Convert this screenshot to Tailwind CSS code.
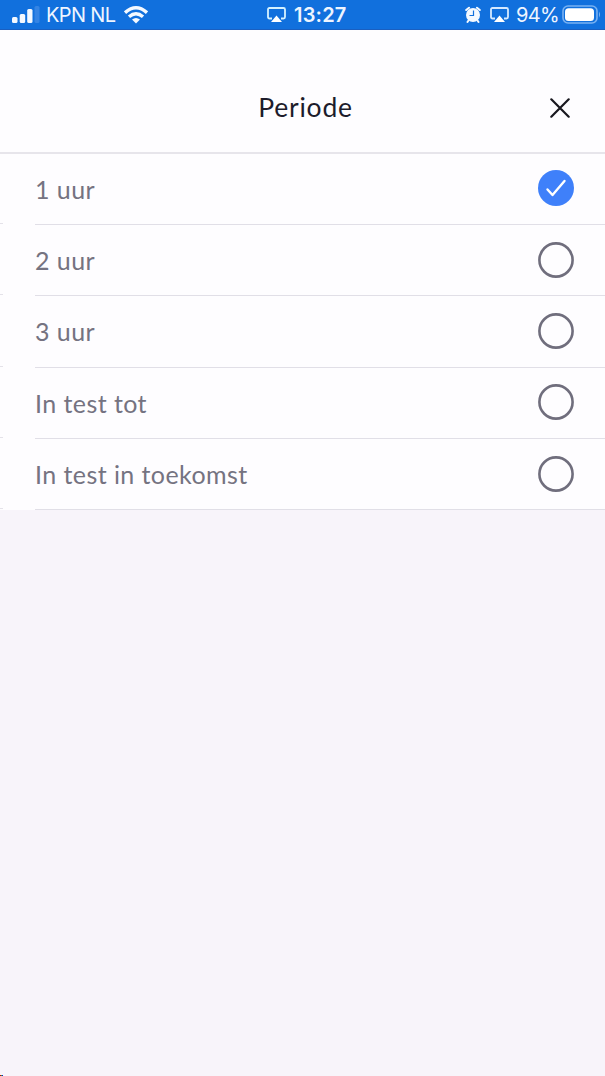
<!DOCTYPE html>
<html lang="nl">
<head>
  <meta charset="UTF-8">
  <meta name="viewport" content="width=device-width, initial-scale=1.0">
  <title>Periode</title>
  <script src="https://cdn.jsdelivr.net/npm/@tailwindcss/browser@4"></script>
</head>
<body class="bg-[#f8f4fa] h-[1076px] overflow-hidden flex flex-col font-['Lato',sans-serif]">

  <!-- Status bar -->
  <header class="h-[30px] shrink-0 bg-[#1170dd] border-b border-[#1a5fc0] text-[#eef5ff] flex items-center pl-3 pr-[3px] font-['Inter',sans-serif] text-[20px] leading-none">
    <div class="flex items-center w-[255px]">
      <svg class="w-7 h-[18px]" viewBox="0 0 28 18" fill="#f4f9ff">
        <rect x="0" y="11" width="5.5" height="6" rx="1.5" />
        <rect x="7.7" y="8" width="5.5" height="9" rx="1.5" />
        <rect x="15.2" y="3" width="5.3" height="14" rx="1.5" />
        <rect x="22.5" y="0" width="5" height="17" rx="1.5" fill="#3484e4" />
      </svg>
      <span class="ml-[6px] w-[72px] tracking-[-0.65px] whitespace-nowrap">KPN NL</span>
      <svg class="ml-[6px] w-6 h-[18px]" viewBox="0 0 24 18" fill="none" stroke="#f4f9ff" stroke-width="3.4">
        <path d="M1 6.6Q12-3 23 6.6" />
        <path d="M5 10.8Q12 4.8 19 10.8" />
        <path d="M12 17.6 8 13.6Q12 10.3 16 13.6Z" fill="#f4f9ff" stroke="none" />
      </svg>
    </div>
    <div class="flex items-center w-[198px]">
      <svg class="w-[19px] h-4" viewBox="0 0 19 16">
        <path d="M5 11.5H2.5Q1 11.5 1 10V2.5Q1 1 2.5 1H16.5Q18 1 18 2.5V10Q18 11.5 16.5 11.5H14" fill="none" stroke="#d5f2ff" stroke-width="1.8" />
        <path d="M9.5 8.5 15 15H4Z" fill="#fff" />
      </svg>
      <span class="ml-[8px] font-semibold tracking-[0.2px]">13:27</span>
    </div>
    <div class="flex items-center">
      <svg class="w-4 h-[18px]" viewBox="0 0 16 18">
        <circle cx="8" cy="9" r="7" fill="#f4f9ff" />
        <path d="M1.2 4 4 1.7M14.8 4 12 1.7M3.5 14.5 2.5 16M12.5 14.5 13.5 16" stroke="#f4f9ff" stroke-width="2" stroke-linecap="round" />
        <path d="M8.5 4.5V9.5H4.5" fill="none" stroke="#1170dd" stroke-width="1.2" />
      </svg>
      <svg class="ml-[9px] w-[19px] h-4" viewBox="0 0 19 16">
        <path d="M5 11.5H2.5Q1 11.5 1 10V2.5Q1 1 2.5 1H16.5Q18 1 18 2.5V10Q18 11.5 16.5 11.5H14" fill="none" stroke="#d5e9ff" stroke-width="1.8" />
        <path d="M9.5 8.5 15 15H4Z" fill="#fff" />
      </svg>
      <span class="ml-[7px] w-[42px] tracking-[-0.6px]">94%</span>
      <svg class="ml-[4px] w-[39px] h-[19px]" viewBox="0 0 39 19">
        <rect x="1" y="1" width="34" height="17" rx="5" fill="none" stroke="#78b1f2" stroke-width="1.6" />
        <rect x="3" y="3.2" width="29" height="12.8" rx="3.5" fill="#fff" />
        <path d="M37 6.5Q39 9.5 37 12.5Z" fill="#78b1f2" />
      </svg>
    </div>
  </header>

  <!-- Title bar -->
  <div class="h-[124px] shrink-0 bg-[#fefdff] border-b-2 border-[#e7e5eb] pt-[33px] grid grid-cols-[1fr_auto_1fr] items-center">
    <h1 class="col-start-2 ml-[6px] text-[26.5px] leading-none font-normal tracking-[0.8px] text-[#1d1c2b]">Periode</h1>
    <svg class="justify-self-end mr-[35px] w-5 h-5" viewBox="0 0 20 20" fill="none" stroke="#19181f" stroke-width="2.2" stroke-linecap="round">
      <path d="M1.3 1.3 18.7 18.7M18.7 1.3 1.3 18.7" />
    </svg>
  </div>

  <!-- Options -->
  <ul class="shrink-0 bg-[#fefdff] text-[25px] leading-none font-normal tracking-[0.43px] text-[#757381]">
    <li class="h-[71px] flex">
      <span class="w-[3px] h-[70px] border-b border-[#e4e2e9]"></span>
      <div class="ml-8 flex-1 flex items-center justify-between pr-[31px] border-b border-[#e1dfe7]">
        <span>1 uur</span>
        <svg class="w-9 h-9 -mt-0.5" viewBox="0 0 36 36">
          <circle cx="18" cy="18" r="18" fill="#3f80fa" />
          <path d="M9.5 19.5 14.5 25 26.5 11" fill="none" stroke="#fff" stroke-width="2.4" stroke-linecap="round" stroke-linejoin="round" />
        </svg>
      </div>
    </li>
    <li class="h-[71px] flex">
      <span class="w-[3px] h-[70px] border-b border-[#e4e2e9]"></span>
      <div class="ml-8 flex-1 flex items-center justify-between pr-[31px] border-b border-[#e1dfe7]">
        <span>2 uur</span>
        <svg class="w-9 h-9" viewBox="0 0 36 36"><circle cx="18" cy="18" r="16.6" fill="none" stroke="#706e7d" stroke-width="2.6" /></svg>
      </div>
    </li>
    <li class="h-[72px] flex">
      <span class="w-[3px] h-[71px] border-b border-[#e4e2e9]"></span>
      <div class="ml-8 flex-1 flex items-center justify-between pr-[31px] border-b border-[#e1dfe7]">
        <span>3 uur</span>
        <svg class="w-9 h-9 -mt-0.5" viewBox="0 0 36 36"><circle cx="18" cy="18" r="16.6" fill="none" stroke="#706e7d" stroke-width="2.6" /></svg>
      </div>
    </li>
    <li class="h-[71px] flex">
      <span class="w-[3px] h-[70px] border-b border-[#e4e2e9]"></span>
      <div class="ml-8 flex-1 flex items-center justify-between pr-[31px] border-b border-[#e1dfe7]">
        <span>In test tot</span>
        <svg class="w-9 h-9 -mt-0.5" viewBox="0 0 36 36"><circle cx="18" cy="18" r="16.6" fill="none" stroke="#706e7d" stroke-width="2.6" /></svg>
      </div>
    </li>
    <li class="h-[71px] flex">
      <span class="w-[3px] h-[70px] border-b border-[#e4e2e9]"></span>
      <div class="ml-8 flex-1 flex items-center justify-between pr-[31px] border-b border-[#e1dfe7]">
        <span>In test in toekomst</span>
        <svg class="w-9 h-9" viewBox="0 0 36 36"><circle cx="18" cy="18" r="16.6" fill="none" stroke="#706e7d" stroke-width="2.6" /></svg>
      </div>
    </li>
  </ul>

  <div class="mt-auto flex">
    <span class="w-px h-px bg-[#d00000]"></span>
    <span class="w-px h-px bg-[#30a040]"></span>
    <span class="w-px h-px bg-[#0020d0]"></span>
  </div>

</body>
</html>
